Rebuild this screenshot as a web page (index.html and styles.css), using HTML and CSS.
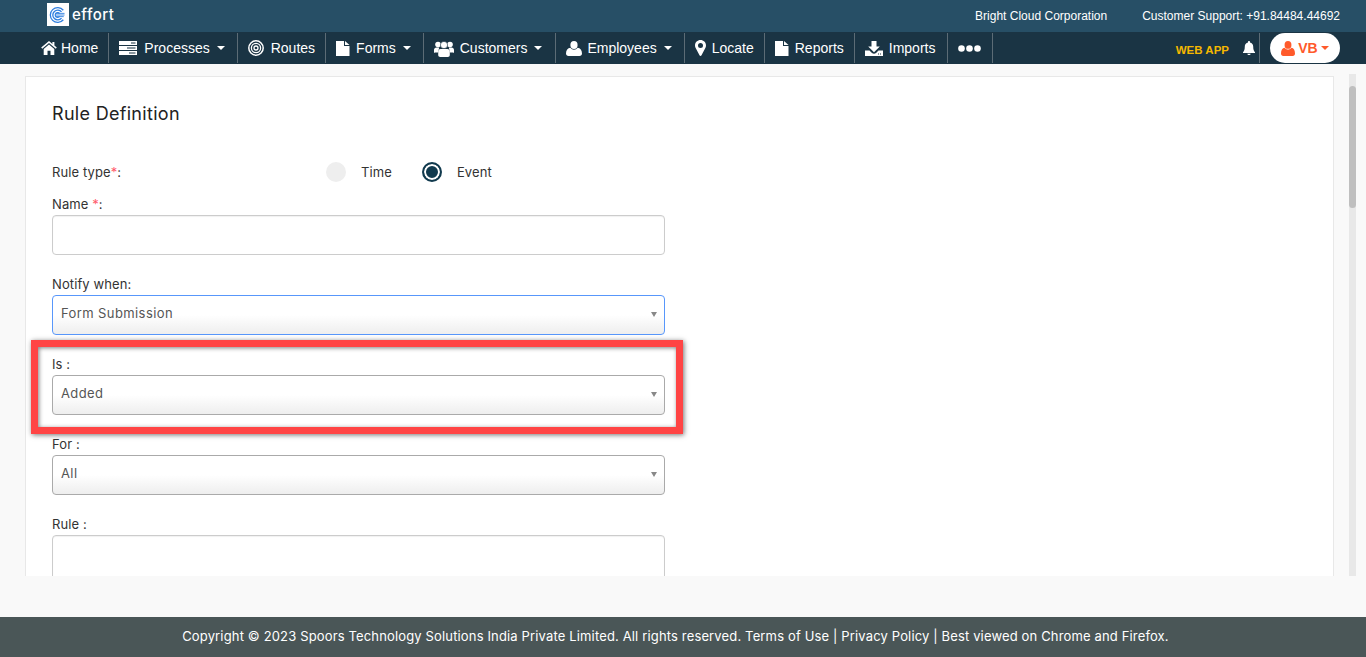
FILE: index.html
```html
<!DOCTYPE html>
<html lang="en">
<head>
    <meta charset="UTF-8">
    <title>Rule Definition</title>
    <link rel="stylesheet" href="styles.css">
</head>
<body>
    <header class="topbar">
        <div class="brand">
            <span class="brand-mark">
                <svg viewBox="0 0 22 22" width="18" height="18" fill="none" stroke="#2f7fe0">
                    <path d="M17.5 5.2A9 9 0 1 0 17.5 16.8" stroke-width="1.6"/>
                    <path d="M15.3 7.2A6 6 0 1 0 15.3 14.8" stroke-width="1.6"/>
                    <path d="M13 9.2A3 3 0 1 0 13 12.8" stroke-width="1.4"/>
                    <path d="M8 9h11M8 11h11M8 13h10" stroke-width="1.1"/>
                </svg>
            </span>
            <span class="brand-name">effort</span>
        </div>
        <div class="top-info">
            <span>Bright Cloud Corporation</span>
            <span>Customer Support: +91.84484.44692</span>
        </div>
    </header>

    <nav class="navbar">
        <ul class="nav-list">
            <li class="nav-item">
                <svg class="icon" viewBox="0 0 16 14" width="16" height="14"><path d="M8 0 .2 6.6l1 1.2L8 2.1l6.8 5.7 1-1.2L13.4 4.600V1h-2v1.900z"/><path d="M8 3.400 2.700 7.900V14H6.500V9.800H9.500V14H13.300V7.900z"/></svg>
                Home
            </li>
            <li class="nav-item">
                <svg class="icon icon-wide" viewBox="0 0 18 14" width="18" height="14"><path d="M0 0h18v4H0zM0 5h18v4H0zM0 10h18v4H0z"/><path fill="#1a3444" d="M12 1.500h4.500v1H12zM8 6.500h8.500v1H8zM10 11.500h6.500v1H10z"/></svg>
                Processes
                <span class="caret"></span>
            </li>
            <li class="nav-item">
                <svg class="icon icon-wide icon-rings" viewBox="0 0 16 16" width="16" height="16"><circle cx="8" cy="8" r="7.200" stroke-width="1.500"/><circle cx="8" cy="8" r="4.600" stroke-width="1.300"/><circle cx="8" cy="8" r="2" stroke-width="1.300"/></svg>
                Routes
            </li>
            <li class="nav-item">
                <svg class="icon icon-narrow" viewBox="0 0 14 15" width="14" height="15"><path d="M0 0h8v5h5.500v10H0z"/><path d="M9 0l4.500 4H9z"/></svg>
                Forms
                <span class="caret"></span>
            </li>
            <li class="nav-item nav-customers">
                <svg class="icon icon-narrow" viewBox="0 0 20 17" width="20" height="17"><circle cx="4" cy="4.500" r="2.800"/><circle cx="16" cy="4.500" r="2.800"/><circle cx="10" cy="5" r="3.600" stroke="#1a3444" stroke-width=".6"/><path d="M0 13V10c0-1.500 1-2.500 2.500-2.500h2.700L4 12.500H1.500C.6 12.500 0 13 0 13zM20 13v-3c0-1.500-1-2.500-2.500-2.500h-2.700l1.200 5h2.500c.9 0 1.500.5 1.500.5z"/><path d="M6.600 9h6.800c1.500 0 2.400 1.200 2.400 2.800V15c0 1.200-.8 2-2 2H6.200c-1.200 0-2-.8-2-2v-3.200C4.200 10.200 5.100 9 6.600 9z"/></svg>
                Customers
                <span class="caret"></span>
            </li>
            <li class="nav-item">
                <svg class="icon icon-tight" viewBox="0 0 16 15" width="16" height="15"><ellipse cx="8" cy="4" rx="3.600" ry="4"/><path d="M4.400 6.800C5.300 8 6.500 8.700 8 8.700s2.700-.7 3.600-1.900c2.700.2 4.400 2.500 4.400 5.700 0 1.500-1 2.500-2.500 2.500h-11C1 15 0 14 0 12.500c0-3.200 1.700-5.500 4.400-5.700z"/></svg>
                Employees
                <span class="caret"></span>
            </li>
            <li class="nav-item">
                <svg class="icon icon-narrow" viewBox="0 0 11 16" width="11" height="16"><path fill-rule="evenodd" d="M5.500 0C8.500 0 11 2.400 11 5.400c0 1.100-.3 1.900-.8 2.900L6.500 15.300c-.4.900-1.600.9-2 0L.8 8.300C.3 7.300 0 6.500 0 5.400 0 2.400 2.500 0 5.500 0zm0 3A2.500 2.500 0 1 0 5.500 8 2.500 2.500 0 0 0 5.500 3z"/></svg>
                Locate
            </li>
            <li class="nav-item">
                <svg class="icon icon-narrow" viewBox="0 0 14 15" width="14" height="15"><path d="M0 0h8v5h5.500v10H0z"/><path d="M9 0l4.500 4H9z"/></svg>
                Reports
            </li>
            <li class="nav-item nav-imports">
                <svg class="icon icon-narrow" viewBox="0 0 18 15" width="18" height="15"><path d="M6.500 0h5v5.500h3.300L9 11.200 3.200 5.500h3.300z"/><path d="M0 9.500h4.500L7 12c1.100 1.100 2.900 1.100 4 0l2.500-2.500H18V15H0z"/><path fill="#1a3444" d="M13 12.500h1v1h-1zM15 12.500h1v1h-1z"/></svg>
                Imports
            </li>
            <li class="nav-item nav-more">
                <svg class="icon" viewBox="0 0 23 7" width="23" height="7"><circle cx="3.500" cy="3.500" r="3.300"/><circle cx="11.500" cy="3.500" r="3.300"/><circle cx="19.500" cy="3.500" r="3.300"/></svg>
            </li>
        </ul>
        <div class="nav-right">
            <span class="web-app">WEB APP</span>
            <span class="bell">
                <svg viewBox="0 0 12 14" width="12" height="14" fill="#fff"><path d="M6 0c.6 0 1 .4 1 1v.6c2 .4 3.200 2 3.200 4 0 3 .6 4.400 1.800 5.600v.8H0v-.8c1.200-1.200 1.800-2.600 1.800-5.600 0-2 1.200-3.600 3.200-4V1c0-.6.4-1 1-1z"/><path d="M4.300 12.700h3.400C7.600 13.500 6.900 14 6 14s-1.600-.5-1.700-1.300z"/></svg>
            </span>
            <button class="user-pill" type="button">
                <svg viewBox="0 0 15 16" width="14" height="15" fill="#ff5a2b"><ellipse cx="7.500" cy="4.200" rx="3.700" ry="4.200"/><path d="M3.800 7.300C4.700 8.500 6 9.200 7.500 9.200s2.800-.7 3.700-1.900C13.600 7.600 15 9.900 15 13.300 15 15 14.100 16 12.600 16H2.400C.9 16 0 15 0 13.300 0 9.900 1.400 7.600 3.800 7.300z"/></svg>
                <span>VB</span>
                <span class="caret caret-orange"></span>
            </button>
        </div>
    </nav>

    <main class="main">
        <div class="scroll-area">
            <section class="card">
                <h2 class="card-title">Rule Definition</h2>
                <form class="rule-form">
                    <div class="type-row">
                        <span class="type-label">Rule type<em>*</em>:</span>
                        <label class="radio-option"><span class="radio"></span>Time</label>
                        <label class="radio-option"><span class="radio radio-on"></span>Event</label>
                    </div>
                    <div class="field">
                        <label>Name <em>*</em>:</label>
                        <input type="text" class="text-input">
                    </div>
                    <div class="field">
                        <label>Notify when:</label>
                        <div class="select-wrap">
                            <select class="select select-focus"><option>Form Submission</option></select>
                        </div>
                    </div>
                    <div class="field">
                        <span class="highlight"></span>
                        <label>Is :</label>
                        <div class="select-wrap">
                            <select class="select"><option>Added</option></select>
                        </div>
                    </div>
                    <div class="field">
                        <label>For :</label>
                        <div class="select-wrap">
                            <select class="select"><option>All</option></select>
                        </div>
                    </div>
                    <div class="field">
                        <label>Rule :</label>
                        <textarea class="text-input rule-text"></textarea>
                    </div>
                </form>
            </section>
            <div class="scrollbar"><div class="scrollbar-thumb"></div></div>
        </div>
    </main>

    <footer class="footer">
        Copyright © 2023 Spoors Technology Solutions India Private Limited. All rights reserved. Terms of Use | Privacy Policy | Best viewed on Chrome and Firefox.
    </footer>
</body>
</html>
```

FILE: styles.css
```css
* {
    box-sizing: border-box;
}
body {
    margin: 0;
    height: 100vh;
    display: flex;
    flex-direction: column;
    overflow: hidden;
    background: #f9f9f9;
    font-family: 'Inter', sans-serif;
    color: #333;
}
.topbar {
    height: 32px;
    flex: none;
    display: flex;
    align-items: center;
    justify-content: space-between;
    padding: 0 26px 0 47px;
    background: #274f66;
    color: #fff;
}
.brand {
    display: flex;
    align-items: center;
    gap: 3px;
    margin-top: -3px;
}
.brand-mark {
    width: 22px;
    height: 23px;
    background: #fff;
    display: flex;
    align-items: center;
    justify-content: center;
}
.brand-name {
    font-size: 15px;
    font-weight: 500;
    letter-spacing: 0.5px;
}
.top-info {
    display: flex;
    gap: 35px;
    font-family: 'Liberation Sans', sans-serif;
    font-size: 12px;
}
.navbar {
    height: 32px;
    flex: none;
    display: flex;
    justify-content: space-between;
    padding: 0 26px 0 31px;
    background: #1a3444;
    color: #fff;
    font-family: 'Liberation Sans', sans-serif;
    font-size: 14px;
}
.nav-list {
    display: flex;
    margin: 0;
    padding: 0;
    list-style: none;
}
.nav-item {
    display: flex;
    align-items: center;
    height: 30px;
    margin-top: 1px;
    padding: 0 10px;
    border-right: 1px solid #5c6c76;
    white-space: nowrap;
}
.nav-customers {
    padding-right: 11px;
}
.nav-imports {
    padding-right: 12px;
}
.icon {
    fill: #fff;
    margin-right: 4px;
    flex: none;
}
.icon-wide {
    margin-right: 7px;
}
.icon-narrow {
    margin-right: 6px;
}
.icon-tight {
    margin-right: 5px;
}
.icon-rings {
    fill: none;
    stroke: #fff;
}
.nav-more .icon {
    margin: 0 1px 0 0;
}
.caret {
    width: 0;
    height: 0;
    margin: 0 2px 0 7px;
    border-left: 4px solid transparent;
    border-right: 4px solid transparent;
    border-top: 4px solid #fff;
}
.nav-right {
    display: flex;
    align-items: center;
}
.web-app {
    margin-top: 3px;
    color: #f5b800;
    font-size: 11.5px;
    font-weight: 700;
}
.bell {
    display: flex;
    align-items: center;
    height: 30px;
    margin-left: 14px;
    padding-right: 4px;
    border-right: 1px solid #5c6c76;
}
.user-pill {
    width: 70px;
    height: 30px;
    margin-left: 10px;
    display: flex;
    align-items: center;
    justify-content: center;
    gap: 3px;
    border: none;
    border-radius: 15px;
    background: #fff;
    color: #ff5a2b;
    font-family: 'Liberation Sans', sans-serif;
    font-size: 14px;
    font-weight: 700;
    padding: 0;
}
.caret-orange {
    margin: 0;
    border-top-color: #ff5a2b;
}
.main {
    flex: 1;
    min-height: 0;
    display: flex;
    padding: 10px 10px 41px 25px;
}
.scroll-area {
    flex: 1;
    display: flex;
    gap: 15px;
    overflow: hidden;
}
.card {
    flex: 1;
    height: 700px;
    margin-top: 2px;
    padding: 24px 26px 0;
    background: #fff;
    border: 1px solid #e8e8e8;
}
.card-title {
    margin: 0 0 35px;
    font-size: 18px;
    font-weight: 400;
    line-height: 26px;
    letter-spacing: 0.3px;
    color: #222;
}
.rule-form {
    width: 613px;
    font-size: 13px;
    letter-spacing: 0.1px;
}
.type-row {
    display: flex;
    align-items: center;
    height: 20px;
    margin-bottom: 13px;
}
.type-label {
    width: 274px;
}
em {
    font-style: normal;
    color: #ff5a6a;
}
.radio-option {
    display: flex;
    align-items: center;
    gap: 15px;
    margin-right: 30px;
}
.radio {
    width: 20px;
    height: 20px;
    border-radius: 50%;
    background: #eee;
}
.radio-on {
    background: #113a4e;
    border: 2px solid #113a4e;
    box-shadow: inset 0 0 0 2px #fff;
}
.field {
    position: relative;
    margin-bottom: 20px;
}
.field label {
    display: block;
    height: 20px;
    line-height: 18px;
}
.text-input {
    display: block;
    width: 100%;
    height: 40px;
    border: 1px solid #ccc;
    border-radius: 4px;
    background: #fff;
    resize: none;
    box-shadow: inset 0 1px 1px rgba(0, 0, 0, 0.06);
}
.rule-text {
    height: 80px;
}
.select-wrap {
    position: relative;
}
.select-wrap::after {
    content: "";
    position: absolute;
    top: 17px;
    right: 8px;
    border-left: 3px solid transparent;
    border-right: 3px solid transparent;
    border-top: 5px solid #888;
}
.select {
    display: block;
    width: 100%;
    height: 40px;
    padding: 0 8px 5px;
    appearance: none;
    border: 1px solid #aaa;
    border-radius: 4px;
    background: linear-gradient(to bottom, #fff 50%, #eee 100%);
    font-family: 'Inter', sans-serif;
    font-size: 13px;
    letter-spacing: 0.4px;
    color: #555;
}
.select-focus {
    border-color: #5897fb;
}
.highlight {
    position: absolute;
    top: -15px;
    left: -21px;
    right: -18px;
    bottom: -19px;
    border: 7px solid #ff4444;
    box-shadow: 1px 1px 5px rgba(0, 0, 0, 0.55), inset 1px 1px 4px rgba(0, 0, 0, 0.5);
    pointer-events: none;
}
.scrollbar {
    flex: none;
    width: 7px;
    padding-top: 12px;
    background: #e8e8e8;
}
.scrollbar-thumb {
    height: 122px;
    border-radius: 4px;
    background: #bfbfbf;
}
.footer {
    height: 40px;
    flex: none;
    display: flex;
    align-items: center;
    justify-content: center;
    padding: 0 15px 2px 0;
    background: #4a5657;
    color: #fff;
    font-size: 13px;
    letter-spacing: 0.15px;
}
```
